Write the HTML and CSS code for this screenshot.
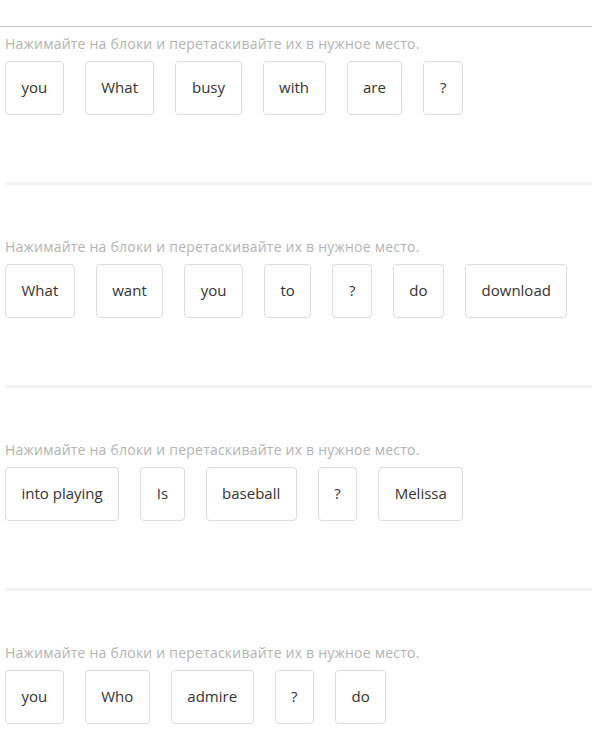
FILE: index.html
```html
<!DOCTYPE html>
<html lang="ru">
<head>
<meta charset="utf-8">
<link rel="stylesheet" href="styles.css">
</head>
<body>
<div class="page">
  <section class="task">
    <p class="hint">Нажимайте на блоки и перетаскивайте их в нужное место.</p>
    <div class="words">
      <span class="word">you</span><span class="word">What</span><span class="word">busy</span><span class="word">with</span><span class="word">are</span><span class="word">?</span>
    </div>
  </section>
  <div class="divider"></div>
  <section class="task">
    <p class="hint">Нажимайте на блоки и перетаскивайте их в нужное место.</p>
    <div class="words">
      <span class="word">What</span><span class="word">want</span><span class="word">you</span><span class="word">to</span><span class="word">?</span><span class="word">do</span><span class="word">download</span>
    </div>
  </section>
  <div class="divider"></div>
  <section class="task">
    <p class="hint">Нажимайте на блоки и перетаскивайте их в нужное место.</p>
    <div class="words">
      <span class="word">into playing</span><span class="word">Is</span><span class="word">baseball</span><span class="word">?</span><span class="word">Melissa</span>
    </div>
  </section>
  <div class="divider"></div>
  <section class="task">
    <p class="hint">Нажимайте на блоки и перетаскивайте их в нужное место.</p>
    <div class="words">
      <span class="word">you</span><span class="word">Who</span><span class="word">admire</span><span class="word">?</span><span class="word">do</span>
    </div>
  </section>
</div>
</body>
</html>
```
FILE: styles.css
```css
html, body {
  margin: 0;
  padding: 0;
  background: #fff;
}
.page {
  margin-top: 26px;
  border-top: 1px solid #c4c4c4;
  font-family: "Open Sans", "Noto Sans", sans-serif;
}
.task {
  padding: 7px 0 0 5px;
}
.hint {
  margin: 0;
  font-size: 14px;
  line-height: 20px;
  letter-spacing: 0.22px;
  color: #b3b3b3;
}
.words {
  display: flex;
  gap: 21px;
  margin-top: 7px;
}
.word {
  display: flex;
  align-items: center;
  height: 54px;
  box-sizing: border-box;
  padding: 0 15.5px 3px;
  border: 1px solid #dcdcdc;
  border-radius: 4px;
  font-size: 15px;
  color: #333;
}
.divider {
  margin: 67px 0 45px 5px;
  height: 3px;
  background: #f3f3f3;
  border-radius: 2px 0 0 2px;
}
```
